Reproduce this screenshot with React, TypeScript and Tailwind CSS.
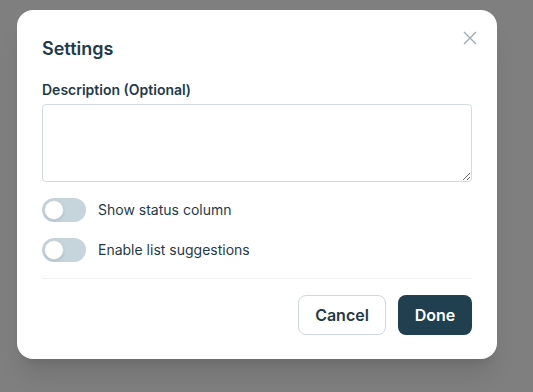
import React, {useState} from 'react'

const Toggle = ({label}: {label: string}) => {
    const [on, setOn] = useState(false);
    return (
        <label className="flex items-center gap-3 cursor-pointer">
            <button
                type="button"
                onClick={() => setOn(!on)}
                className={"relative h-6 w-11 shrink-0 rounded-full " + (on ? "bg-[#20404f]" : "bg-[#c6d5dc]")}
            >
                <span
                    className={"absolute top-[2px] h-5 w-5 rounded-full bg-white border border-[#c6d5dc] shadow-sm " + (on ? "left-[22px]" : "left-[2px]")}
                />
            </button>
            <span className="text-[14px] leading-5 text-[#1f3a4a]">{label}</span>
        </label>
    );
}

const App = () => {
    return (
        <div className="relative h-[392px] w-[533px] overflow-hidden bg-[#7f7f7f]" style={{fontFamily: "Inter, 'Noto Sans', sans-serif"}}>
            <div className="absolute left-[17px] top-[10px] w-[480px] rounded-2xl bg-white px-[25px] pt-[25px] pb-6 shadow-xl">
                <button className="absolute right-[20px] top-[21px] text-[#9aa8b0]" aria-label="close">
                    <svg width="14" height="14" viewBox="0 0 14 14" fill="none" stroke="currentColor" strokeWidth="1.2">
                        <path d="M1 1L13 13M13 1L1 13"/>
                    </svg>
                </button>
                <h2 className="text-[18px] leading-7 font-semibold text-[#1f3a4a]">Settings</h2>
                <label className="mt-[17px] block text-[14px] leading-5 font-semibold text-[#1f3a4a]">Description (Optional)</label>
                <textarea className="mt-1 block h-[78px] w-full rounded-[4px] border border-[#d3dadf] px-3 py-2 text-sm outline-none"/>
                <div className="mt-4 flex flex-col gap-4">
                    <Toggle label="Show status column"/>
                    <Toggle label="Enable list suggestions"/>
                </div>
                <div className="mt-4 border-t border-[#eef0f2]"/>
                <div className="mt-4 flex justify-end gap-3">
                    <button className="h-10 w-[88px] rounded-lg border border-[#cfd8de] bg-white text-[16px] font-semibold text-[#1f3a4a]">Cancel</button>
                    <button className="h-10 w-[74px] rounded-lg bg-[#20404f] text-[16px] font-semibold text-white">Done</button>
                </div>
            </div>
        </div>
    );
}

export default App
